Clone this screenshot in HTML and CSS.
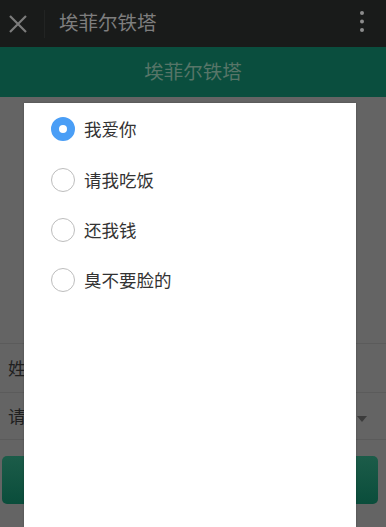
FILE: index.html
```html
<!DOCTYPE html>
<html lang="zh">
<head>
<meta charset="utf-8">
<link rel="stylesheet" href="styles.css">
</head>
<body>
<div class="page">
  <header class="topbar">
    <svg class="close" width="20" height="20" viewBox="0 0 20 20"><path d="M2 2 L18 18 M18 2 L2 18" stroke="#7c7c7c" stroke-width="2.2" fill="none"/></svg>
    <span class="divider"></span>
    <span class="title">埃菲尔铁塔</span>
    <svg class="more" width="6" height="24" viewBox="0 0 6 24"><circle cx="3" cy="3" r="2" fill="#8c8c8c"/><circle cx="3" cy="11.5" r="2" fill="#8c8c8c"/><circle cx="3" cy="20" r="2" fill="#8c8c8c"/></svg>
  </header>
  <div class="banner">埃菲尔铁塔</div>
  <div class="content">
    <div class="row">姓</div>
    <div class="row select">请<span class="caret"></span></div>
    <div class="btn"></div>
  </div>
  <div class="modal">
    <div class="option"><span class="radio on"></span><span class="label">我爱你</span></div>
    <div class="option"><span class="radio"></span><span class="label">请我吃饭</span></div>
    <div class="option"><span class="radio"></span><span class="label">还我钱</span></div>
    <div class="option"><span class="radio"></span><span class="label">臭不要脸的</span></div>
  </div>
</div>
</body>
</html>
```
FILE: styles.css
```css
* { box-sizing: border-box; }
html, body { margin: 0; padding: 0; }
body {
  width: 386px;
  height: 527px;
  overflow: hidden;
  background: #646464;
  font-family: "Noto Sans CJK SC", "Noto Sans", sans-serif;
}
.page { position: relative; width: 386px; height: 527px; }
.topbar {
  height: 47px;
  background: #191b1a;
  display: flex;
  align-items: center;
  padding-left: 8px;
}
.close { flex: none; margin-top: 1px; }
.divider {
  width: 1px;
  height: 28px;
  background: #222423;
  margin-left: 16px;
  margin-right: 14px;
}
.title {
  color: #7e7e7e;
  font-size: 19.5px;
  line-height: 1;
  flex: 1;
  margin-top: -3px;
}
.more { margin-right: 21px; margin-top: -3px; }
.banner {
  height: 50px;
  background: #0a4e3e;
  color: #577568;
  font-size: 19.5px;
  display: flex;
  align-items: center;
  justify-content: center;
  padding-bottom: 3px;
}
.content { padding-top: 246px; }
.row {
  height: 48.5px;
  border-top: 1px solid #5b5b5b;
  display: flex;
  align-items: center;
  padding-left: 8px;
  color: #1f1f1f;
  font-size: 17.5px;
  position: relative;
}
.row.select { border-bottom: 1px solid #5b5b5b; }
.caret {
  position: absolute;
  right: 19px;
  top: 23px;
  width: 0; height: 0;
  border-left: 5px solid transparent;
  border-right: 5px solid transparent;
  border-top: 6px solid #3c3c3c;
}
.btn {
  margin: 16px 8px 0 2px;
  height: 48px;
  border-radius: 5px;
  background: linear-gradient(#1c5c49, #0a4d3b);
}
.modal {
  position: absolute;
  left: 24px;
  top: 103px;
  width: 332px;
  bottom: 0;
  background: #fff;
  padding-top: 1px;
  box-shadow: 0 0 2px rgba(0,0,0,0.25);
}
.option {
  height: 50.4px;
  display: flex;
  align-items: center;
  padding-left: 27px;
}
.radio {
  width: 24px;
  height: 24px;
  border-radius: 50%;
  border: 1.5px solid #bdbdbd;
  flex: none;
}
.radio.on {
  border: 8px solid #4a9ef6;
  background: #fff;
}
.label {
  margin-left: 9px;
  font-size: 17.5px;
  color: #333;
  margin-top: -1px;
}
```
